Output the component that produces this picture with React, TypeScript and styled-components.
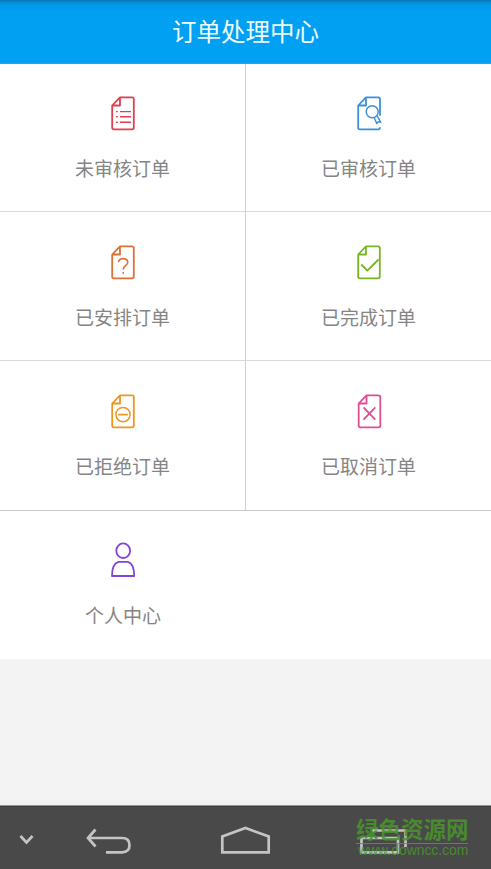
import React from 'react';
import styled, { createGlobalStyle } from 'styled-components';

const GlobalStyle = createGlobalStyle`
  * { box-sizing: border-box; }
  html, body { margin: 0; padding: 0; }
  body {
    background: #f3f3f3;
    font-family: "Noto Sans CJK SC", "Noto Sans", sans-serif;
  }
`;

const Screen = styled.div`
  width: 491px;
  height: 869px;
  display: flex;
  flex-direction: column;
  background: #f3f3f3;
  overflow: hidden;
`;

const Header = styled.header`
  height: 64px;
  padding-bottom: 2px;
  flex: none;
  display: flex;
  align-items: center;
  justify-content: center;
  background: linear-gradient(#0872b0 0, #058bd4 2px, #0399e9 5px, #02a0f3 12px, #02a0f3 62px, #24a8ee 64px);
`;

const Title = styled.h1`
  margin: 0;
  color: #effcff;
  font-size: 24.5px;
  font-weight: 400;
  line-height: 36px;
`;

const Grid = styled.main`
  flex: none;
  display: grid;
  grid-template-columns: 246px 245px;
  grid-template-rows: 148px 149px 150px 148px;
  background: #fff;
`;

const Cell = styled.button<{ $divided?: boolean; $wide?: boolean; $strong?: boolean; $raised?: boolean }>`
  grid-column: ${({ $wide }) => ($wide ? '1 / -1' : 'auto')};
  width: ${({ $wide }) => ($wide ? '246px' : 'auto')};
  display: flex;
  flex-direction: column;
  align-items: center;
  margin: 0;
  padding: ${({ $raised }) => ($raised ? '30px' : '31px')} 0 0;
  border: 0;
  border-right: ${({ $divided }) => ($divided ? '1px solid #d0d0d0' : '0')};
  border-bottom: ${({ $wide, $strong }) => ($wide ? '0' : `1px solid ${$strong ? '#c9c9c9' : '#dadada'}`)};
  background: transparent;
  font-family: inherit;
`;

const Icon = styled.svg<{ $color: string }>`
  width: 28px;
  height: 36px;
  flex: none;
  fill: none;
  stroke: ${({ $color }) => $color};
  stroke-width: 1.8;
  stroke-linejoin: round;
  overflow: visible;
`;

const Label = styled.span`
  margin-top: 24px;
  color: #858585;
  font-size: 19px;
  line-height: 28px;
`;

const Filler = styled.div`
  flex: 1;
`;

const NavBar = styled.nav`
  position: relative;
  height: 64px;
  flex: none;
  display: flex;
  align-items: flex-start;
  background: #49494a;
  border-top: 1px solid #929692;
  box-shadow: inset 0 1px #3e3e40;
`;

const NavIcon = styled.svg<{ $w: number; $gap: number }>`
  width: ${({ $w }) => $w}px;
  height: 63px;
  margin-left: ${({ $gap }) => $gap}px;
  flex: none;
  fill: none;
  stroke: #c4c4c4;
  stroke-width: 2.7;
`;

const Watermark = styled.div`
  position: absolute;
  left: 356px;
  top: 11px;
  width: 112px;
  color: #4b932c;
  opacity: 0.88;
  white-space: nowrap;
`;

const MarkName = styled.div`
  height: 27px;
  border-bottom: 1px solid #777b76;
  font-size: 22.5px;
  font-weight: 700;
  line-height: 23px;
`;

const MarkUrl = styled.div`
  padding-left: 2px;
  font-family: "Liberation Sans", sans-serif;
  font-size: 13.9px;
  line-height: 13px;
`;

const Page = ({ open = false }: { open?: boolean }) => (
  <path
    d={
      open
        ? 'M25 21V4.5Q25 2.6 23.2 2.6H11L3.2 10.8V33Q3.2 34.6 4.8 34.6H23.3Q25 34.6 25 32.5M11 2.6V10.8H3.2'
        : 'M11 2.6H23Q24.8 2.6 24.8 4.4V32.8Q24.8 34.6 23 34.6H5Q3.2 34.6 3.2 32.8V10.8ZM11 2.6V10.8H3.2'
    }
  />
);

type Kind = 'list' | 'review' | 'question' | 'check' | 'minus' | 'cross' | 'person';

const marks: Record<Kind, React.ReactNode> = {
  list: (
    <>
      <Page />
      <path strokeWidth="1.4" d="M11 16.9H22M11 22.1H22M11 27.5H22M7 16.9H8.8M7 22.1H8.8M7 27.5H8.8" />
    </>
  ),
  review: (
    <>
      <Page open />
      <circle cx="17.2" cy="17" r="6" strokeWidth="1.5" />
      <path strokeWidth="1.4" d="M19 22.6L21.8 28.9L23.1 26.9L25.8 27.7L22 20.8" />
    </>
  ),
  question: (
    <>
      <Page />
      <path strokeWidth="1.6" d="M9.5 18.5C9.5 13.7 18.8 13.7 18.8 18.6C18.8 21.7 14.2 21.9 14.2 26.1M14.2 28.3V30" />
    </>
  ),
  check: (
    <>
      <Page />
      <path d="M6.2 20.8L12.3 27L23.5 15.8" />
    </>
  ),
  minus: (
    <>
      <Page />
      <circle cx="14" cy="21.9" r="7.1" strokeWidth="1.5" />
      <path d="M9.2 21.9H18.8" />
    </>
  ),
  cross: (
    <g transform="translate(0.5 0)">
      <Page />
      <path d="M8 14.6L19.8 27M19.8 14.6L8 27" />
    </g>
  ),
  person: (
    <>
      <ellipse cx="14.2" cy="9" rx="6.9" ry="7.3" />
      <path d="M9.5 20.1H19Q25.2 22 25.2 34.3H3Q3 22 9.5 20.1Z" />
    </>
  ),
};

const items: { kind: Kind; label: string; color: string }[] = [
  { kind: 'list', label: '未审核订单', color: '#dd4150' },
  { kind: 'review', label: '已审核订单', color: '#3c91d8' },
  { kind: 'question', label: '已安排订单', color: '#df7135' },
  { kind: 'check', label: '已完成订单', color: '#78b526' },
  { kind: 'minus', label: '已拒绝订单', color: '#ee961f' },
  { kind: 'cross', label: '已取消订单', color: '#e04d91' },
  { kind: 'person', label: '个人中心', color: '#8046d5' },
];

export default function App() {
  return (
    <>
      <GlobalStyle />
      <Screen>
        <Header>
          <Title>订单处理中心</Title>
        </Header>
        <Grid>
          {items.map(({ kind, label, color }, i) => (
            <Cell
              key={kind}
              $divided={i % 2 === 0 && kind !== 'person'}
              $wide={kind === 'person'}
              $strong={i > 3}
              $raised={i < 2 || kind === 'person'}
            >
              <Icon viewBox="0 -0.7 28 36" $color={color}>
                {marks[kind]}
              </Icon>
              <Label>{label}</Label>
            </Cell>
          ))}
        </Grid>
        <Filler />
        <NavBar>
          <NavIcon $w={16} $gap={19} viewBox="0 0 16 63">
            <path d="M1.5 30L7.5 36.5L13.5 30" />
          </NavIcon>
          <NavIcon $w={48} $gap={50} viewBox="0 0 48 63">
            <path d="M10.5 23.5L3 32L10.5 40.5M3 32H37Q44.5 32 44.5 39Q44.5 46.3 37 46.3H21" />
          </NavIcon>
          <NavIcon $w={52} $gap={87} viewBox="0 0 52 63">
            <path d="M2.3 46.4V30.5L25.5 22L48.7 30.5V46.4Z" />
          </NavIcon>
          <NavIcon $w={50} $gap={87} viewBox="0 0 50 63">
            <path d="M2.5 32H39V46.3H2.5ZM13 24.5H46.5V41" />
          </NavIcon>
          <Watermark>
            <MarkName>绿色资源网</MarkName>
            <MarkUrl>www.downcc.com</MarkUrl>
          </Watermark>
        </NavBar>
      </Screen>
    </>
  );
}
